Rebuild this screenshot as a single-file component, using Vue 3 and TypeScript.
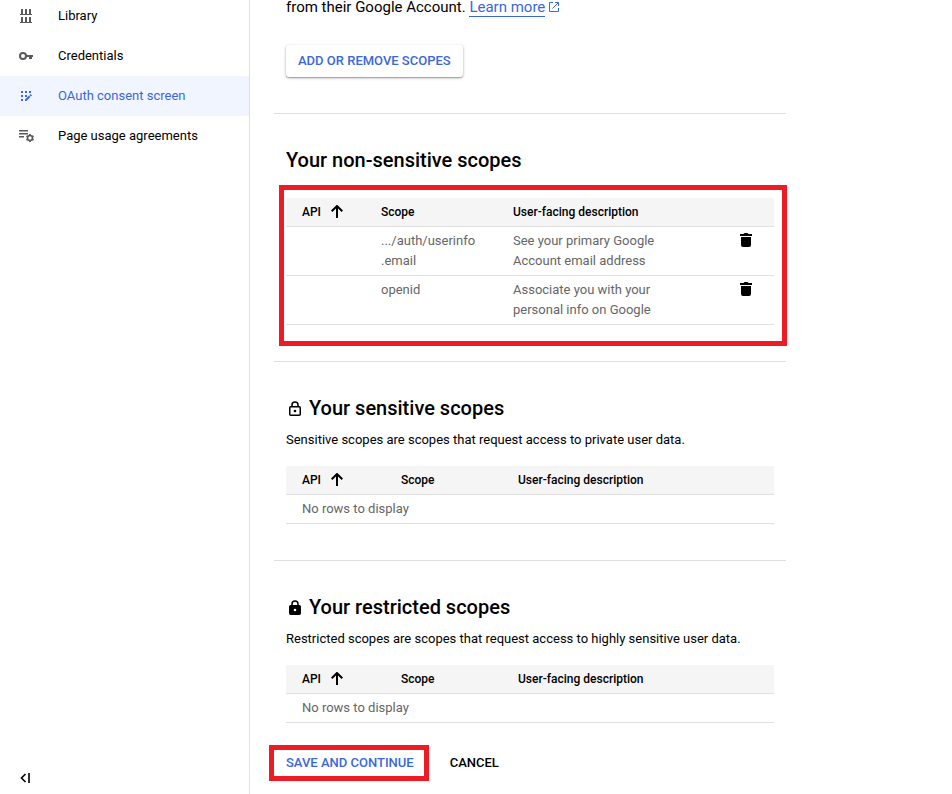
<script setup lang="ts">
interface ScopeRow {
  path: string[]
  description: string
}

interface ScopeSection {
  id: string
  title: string
  note?: string
  lock?: 'outline' | 'solid'
  rows: ScopeRow[]
}

const navItems = [
  { id: 'library', label: 'Library' },
  { id: 'credentials', label: 'Credentials' },
  { id: 'consent', label: 'OAuth consent screen' },
  { id: 'agreements', label: 'Page usage agreements' },
]
const activeItem = 'consent'

const sections: ScopeSection[] = [
  {
    id: 'non-sensitive',
    title: 'Your non-sensitive scopes',
    rows: [
      {
        path: ['.../auth/userinfo', '.email'],
        description: 'See your primary Google Account email address',
      },
      {
        path: ['openid'],
        description: 'Associate you with your personal info on Google',
      },
    ],
  },
  {
    id: 'sensitive',
    title: 'Your sensitive scopes',
    note: 'Sensitive scopes are scopes that request access to private user data.',
    lock: 'outline',
    rows: [],
  },
  {
    id: 'restricted',
    title: 'Your restricted scopes',
    note: 'Restricted scopes are scopes that request access to highly sensitive user data.',
    lock: 'solid',
    rows: [],
  },
]
</script>

<template>
  <div class="page">
    <aside class="sidebar">
      <nav class="nav">
        <a
          v-for="item in navItems"
          :key="item.id"
          href="#"
          class="nav-item"
          :class="{ active: item.id === activeItem }"
        >
          <svg v-if="item.id === 'library'" class="nav-icon" viewBox="0 0 16 16" aria-hidden="true">
            <path fill="currentColor" d="M3 1h2v5h2V1h2v5h2V1h2v5h1v1H2V6h1zM3 9h2v5h2V9h2v5h2V9h2v5h1v1H2v-1h1z" />
          </svg>
          <svg v-else-if="item.id === 'credentials'" class="nav-icon" viewBox="0 0 16 16" aria-hidden="true">
            <circle cx="5" cy="8" r="3" fill="none" stroke="currentColor" stroke-width="2" />
            <path fill="currentColor" d="M8 7h7v2h-1v2h-3V9H8z" />
          </svg>
          <svg v-else-if="item.id === 'consent'" class="nav-icon" viewBox="0 0 16 16" aria-hidden="true">
            <path fill="currentColor" d="M3 3h2v2H3zM7 3h2v2H7zM11 3h2v2h-2zM3 7h2v2H3zM7 7h2v2H7zM3 11h2v2H3z" />
            <path fill="currentColor" d="M7 11.600 11 7.600l1.400 1.400L8.400 13H7zM11.500 7.100l1.100-1.100 1.400 1.400-1.100 1.100z" />
          </svg>
          <svg v-else class="nav-icon" viewBox="0 0 16 16" aria-hidden="true">
            <path fill="currentColor" d="M1 2h9v1.600H1zM1 5h9v1.600H1zM1 8h5v1.600H1z" />
            <circle cx="12" cy="10" r="2.500" fill="none" stroke="currentColor" stroke-width="1.600" />
            <path
              stroke="currentColor"
              stroke-width="1.800"
              d="M12 6v1.500M12 12.500V14M8.500 8l1.300.8M14.200 11.200l1.300.8M8.500 12l1.300-.8M14.200 8.800l1.300-.8"
            />
          </svg>
          <span>{{ item.label }}</span>
        </a>
      </nav>
      <button type="button" class="collapse" aria-label="Collapse menu">
        <svg viewBox="0 0 12 10" width="12" height="10" aria-hidden="true">
          <path fill="none" stroke="currentColor" stroke-width="1.600" d="M5.500 1 1.500 5l4 4M9 0v10" />
        </svg>
      </button>
    </aside>

    <main class="main">
      <div class="intro">
        <p class="intro-text">
          from their Google Account.
          <a href="#" class="learn">Learn more</a>
          <svg class="external" viewBox="0 0 12 12" width="12" height="12" aria-hidden="true">
            <path fill="none" stroke="currentColor" d="M5 1.500H1.500v9h9V7M7 1.500h3.500V5M10.500 1.500 4.500 7.500" />
          </svg>
        </p>
        <button type="button" class="raised">Add or remove scopes</button>
      </div>

      <section v-for="section in sections" :key="section.id" class="section">
        <h2 class="title">
          <svg v-if="section.lock" class="lock" viewBox="0 0 14 16" width="14" height="16" aria-hidden="true">
            <path fill="none" stroke="currentColor" stroke-width="1.500" d="M4 7V5a3 3 0 0 1 6 0v2" />
            <rect
              x="1.750"
              y="6.750"
              width="10.500"
              height="8.500"
              rx="1"
              :fill="section.lock === 'solid' ? 'currentColor' : 'none'"
              stroke="currentColor"
              stroke-width="1.500"
            />
            <circle cx="7" cy="11" r="1.300" :fill="section.lock === 'solid' ? '#fff' : 'currentColor'" />
          </svg>
          <span>{{ section.title }}</span>
        </h2>
        <p v-if="section.note" class="note">{{ section.note }}</p>
        <div class="table-wrap" :class="{ marked: section.rows.length }">
          <table class="table" :class="{ filled: section.rows.length }">
            <thead>
              <tr>
                <th class="col-api" scope="col">
                  <span class="sort">
                    API
                    <svg viewBox="0 0 12 14" width="12" height="14" aria-hidden="true">
                      <path fill="none" stroke="currentColor" stroke-width="2" d="M.7 6.200 6 1l5.300 5.200M6 1.500V13" />
                    </svg>
                  </span>
                </th>
                <th class="col-scope" scope="col">Scope</th>
                <th scope="col">User-facing description</th>
                <td class="col-action"></td>
              </tr>
            </thead>
            <tbody>
              <tr v-for="row in section.rows" :key="row.description">
                <td></td>
                <td>
                  <template v-for="part in row.path" :key="part">{{ part }}<wbr /></template>
                </td>
                <td>{{ row.description }}</td>
                <td class="col-action">
                  <button type="button" class="delete" aria-label="Delete scope">
                    <svg viewBox="0 0 12 14" width="12" height="14" aria-hidden="true">
                      <path fill="currentColor" d="M0 1h3.500l1-1h3l1 1H12v2H0zM1 4h10v8a2 2 0 0 1-2 2H3a2 2 0 0 1-2-2z" />
                    </svg>
                  </button>
                </td>
              </tr>
              <tr v-if="!section.rows.length">
                <td colspan="4">No rows to display</td>
              </tr>
            </tbody>
          </table>
        </div>
      </section>

      <div class="actions">
        <button type="button" class="save">Save and continue</button>
        <button type="button" class="cancel">Cancel</button>
      </div>
    </main>
  </div>
</template>

<style>
body {
  margin: 0;
  background: #fff;
}
</style>

<style scoped>
.page {
  display: flex;
  min-height: 100vh;
  font-family: Roboto, 'Liberation Sans', sans-serif;
  font-size: 13px;
  line-height: 20px;
  color: #000;
}

button {
  margin: 0;
  padding: 0;
  border: 0;
  background: none;
  font: inherit;
  color: inherit;
  cursor: pointer;
}

.sidebar {
  box-sizing: border-box;
  flex: 0 0 250px;
  display: flex;
  flex-direction: column;
  justify-content: space-between;
  align-items: stretch;
  border-right: 1px solid #e0e0e0;
}

.nav {
  margin-top: -4px;
}

.nav-item {
  display: flex;
  align-items: center;
  gap: 24px;
  height: 40px;
  padding-left: 18px;
  color: #202124;
  text-decoration: none;
}

.nav-item span {
  color: #000;
}

.nav-icon {
  width: 16px;
  height: 16px;
  color: #5a5a5a;
}

.nav-item.active {
  background: #f0f5ff;
}

.nav-item.active span,
.nav-item.active .nav-icon {
  color: #3b68d8;
}

.collapse {
  align-self: flex-start;
  display: flex;
  padding: 11px 20px;
}

.main {
  flex: 1 1 auto;
  max-width: 512px;
  padding: 0 24px;
}

.intro {
  padding: 0 12px 36px;
}

.intro-text {
  margin: 0 0 31px;
  font-size: 15px;
  line-height: 14px;
}

.learn {
  margin-right: 3px;
  color: #3b68d8;
  text-decoration: none;
  border-bottom: 1px solid #3b68d8;
}

.external {
  display: inline-block;
  vertical-align: -1px;
  color: #3b68d8;
}

.raised {
  display: block;
  height: 32px;
  padding: 0 12px;
  border-radius: 3px;
  font-weight: 500;
  text-transform: uppercase;
  color: #3b68d8;
  box-shadow: 0 1px 3px rgba(0, 0, 0, 0.3), 0 1px 1px rgba(0, 0, 0, 0.2);
}

.section {
  display: flex;
  flex-direction: column;
  padding: 34px 12px 36px;
  border-top: 1px solid #e0e0e0;
}

.section:last-of-type {
  padding-bottom: 22px;
}

.title {
  display: flex;
  align-items: center;
  gap: 7px;
  margin: 0 0 10px;
  font-size: 20px;
  font-weight: 500;
  line-height: 24px;
}

.lock {
  margin-left: 2px;
}

.note {
  margin: 0;
}

.table-wrap {
  margin-top: 16px;
}

.marked {
  position: relative;
}

.marked::after {
  content: '';
  position: absolute;
  inset: -13px -13px -21px -7px;
  border: 5px solid #ed1c24;
  pointer-events: none;
}

.table {
  width: 100%;
  table-layout: fixed;
  border-collapse: separate;
  border-spacing: 0;
}

.table th,
.table td {
  padding: 4px 16px;
  border-bottom: 1px solid #e0e0e0;
  text-align: left;
  vertical-align: top;
}

.table th {
  font-size: 12px;
  font-weight: 500;
}

.table thead {
  background: #f5f5f5;
}

.table tbody {
  color: #666;
}

.col-api {
  width: 67px;
}

.col-scope {
  width: 85px;
}

.filled .col-api {
  width: 47px;
}

.filled .col-scope {
  width: 100px;
}

.table .col-action {
  width: 62px;
  padding-right: 22px;
}

.sort {
  display: flex;
  align-items: center;
  gap: 10px;
}

.delete {
  display: flex;
  margin-left: auto;
  padding: 2px 0;
  color: #000;
}

.actions {
  display: flex;
  gap: 21px;
  margin-left: -5px;
}

.save,
.cancel {
  font-weight: 500;
  text-transform: uppercase;
}

.save {
  height: 36px;
  padding: 0 10px 0 12px;
  border: 5px solid #ed1c24;
  color: #3b68d8;
}
</style>
